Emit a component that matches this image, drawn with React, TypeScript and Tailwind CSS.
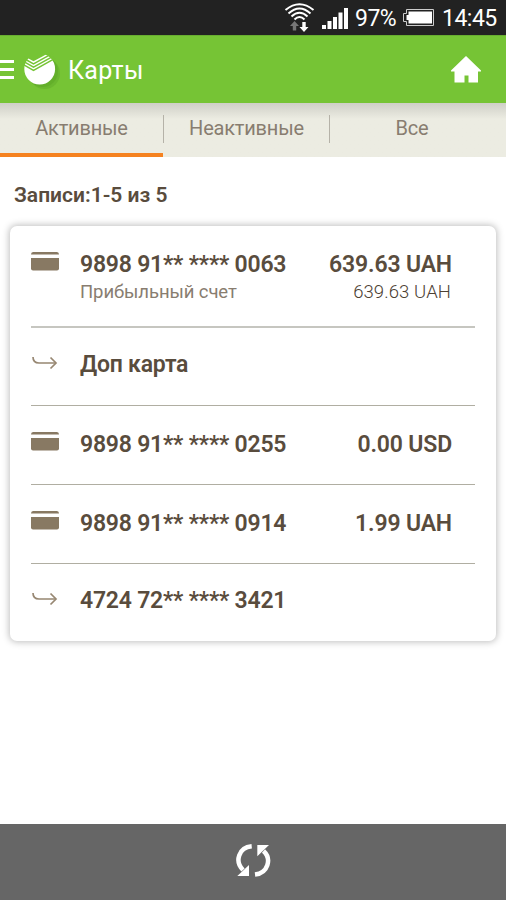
import type { ReactNode } from "react";

type Row = {
  kind: "card" | "linked";
  title: string;
  amount?: string;
  note?: string;
  noteAmount?: string;
  box: string;
};

const rows: Row[] = [
  {
    kind: "card",
    title: "9898 91** **** 0063",
    amount: "639.63 UAH",
    note: "Прибыльный счет",
    noteAmount: "639.63 UAH",
    box: "h-[102px] pt-[23px] border-b-2 border-[#c6c6c0]",
  },
  { kind: "linked", title: "Доп карта", box: "h-[78px] pt-[21px] border-b border-[#b0aea2]" },
  { kind: "card", title: "9898 91** **** 0255", amount: "0.00 USD", box: "h-[79px] pt-[23px] border-b border-[#b0aea2]" },
  { kind: "card", title: "9898 91** **** 0914", amount: "1.99 UAH", box: "h-[79px] pt-[23px] border-b border-[#b0aea2]" },
  { kind: "linked", title: "4724 72** **** 3421", box: "h-[77px] pt-[21px]" },
];

function StatusBar() {
  return (
    <div className="flex h-[35px] shrink-0 bg-[#222222] text-[23px] leading-[37px] text-white">
      <svg width="354" height="35" viewBox="0 0 354 35" fill="none" className="shrink-0">
        <g stroke="#fff" strokeWidth="2">
          <path d="M285.500 10Q299.500 -1.500 313.500 10" />
          <path d="M288.500 13.500Q299.500 3.500 310.500 13.500" />
          <path d="M291.500 16.500Q299.500 9 307.500 16.500" />
          <path d="M294.500 19.500Q299.500 14.500 304.500 19.500" />
        </g>
        <path d="M294.500 21l4.500 5h-2.800v4.500h-3.400V26H290z" fill="#777" />
        <path d="M304 32l-4.500-5h2.800v-5h3.400v5h2.800z" fill="#fff" />
        <path d="M322 25h4v4h-4zM327.500 21h4v8h-4zM333 17h4v12h-4zM338.500 12.500h4V29h-4zM344 8h4v21h-4z" fill="#fff" />
      </svg>
      <span className="w-[48px] pl-px tracking-[-0.5px]">97%</span>
      <svg width="41" height="35" viewBox="0 0 41 35" fill="none" className="shrink-0">
        <path d="M4.500 9.500h27v16h-27v-4h-3v-8h3z" stroke="#ccc" />
        <path d="M6.500 11.500H30v12H6.500v-3.500H4.500v-5h2z" fill="#fff" />
      </svg>
      <span className="-ml-px tracking-[-0.5px]">14:45</span>
    </div>
  );
}

function Logo() {
  return (
    <svg width="42" height="42" viewBox="0 0 42 42" className="ml-[7px] shrink-0">
      <circle cx="23.500" cy="24.500" r="15.500" fill="#5aa326" opacity="0.35" />
      <circle cx="21.500" cy="22.500" r="15.500" fill="#5aa326" opacity="0.45" />
      <circle cx="18.700" cy="20" r="15.400" fill="#fff" />
      {/* notch above the top stripe */}
      <path d="M3 7L12.500 12.300L26 5V2H3z" fill="#76c435" />
      <g fill="none" stroke="#76c435" strokeWidth="1.500">
        <path d="M3 9.500L12.500 15L32 4.200" />
        <path d="M2 12.200L12.500 18.200L32 7.400" />
        <path d="M2 15.400L12.500 21.400L34 9.400" />
      </g>
    </svg>
  );
}

function Header() {
  return (
    <header className="flex h-[68px] shrink-0 items-center border-t border-[#68ad30] bg-[#76c435]">
      <div className="flex w-3.5 flex-col gap-[5px]">
        <div className="h-[3px] bg-white" />
        <div className="h-[3px] bg-white" />
        <div className="h-[3px] bg-white" />
      </div>
      <Logo />
      <h1 className="ml-[5px] pt-[3px] text-[25px] tracking-[0.3px] text-white">Карты</h1>
      <svg width="32" height="28" viewBox="0 0 32 28" className="mr-6 ml-auto" fill="#fff">
        <path d="M16 0L31 14.500V15.500h-3V26.500h-9.500V19.500h-4v7H4.500V15.500H1V14.500z" />
      </svg>
    </header>
  );
}

function Tab({ children, className }: { children: ReactNode; className: string }) {
  return (
    <div className={`h-[54px] pt-[11px] text-center text-[20px] leading-7 tracking-[-0.2px] ${className}`}>
      {children}
    </div>
  );
}

function Tabs() {
  return (
    <nav className="flex h-[54px] shrink-0 bg-[#ecece2] bg-linear-to-b from-[#cfcfc7] to-[#ecece2] to-[16px] text-[#887d70]">
      <Tab className="w-[163px] border-b-4 border-[#f58220]">Активные</Tab>
      <div className="mt-3 h-7 w-px bg-[#b5b2a8]" />
      <Tab className="w-[165px]">Неактивные</Tab>
      <div className="mt-3 h-7 w-px bg-[#b5b2a8]" />
      <Tab className="w-[164px]">Все</Tab>
    </nav>
  );
}

function CardIcon() {
  return (
    <svg width="28" height="19" viewBox="0 0 28 19" fill="#887963" className="mt-[3px]">
      <path d="M0 2.500Q0 0 2 0H26Q28 0 28 2.500z" />
      <path d="M0 6H28V16.500Q28 18.500 26 18.500H2Q0 18.500 0 16.500z" />
    </svg>
  );
}

function LinkedIcon() {
  return (
    <svg width="28" height="16" viewBox="0 0 28 16" fill="none" stroke="#978772" strokeWidth="1.700" className="mt-[6px]">
      <path d="M2 2C2 6 4 8 8 8H25" />
      <path d="M19.500 2.500L25 8L19.500 13.500" />
    </svg>
  );
}

function AccountRow({ row }: { row: Row }) {
  return (
    <div className={`flex ${row.box}`}>
      <div className="w-[49px] shrink-0">{row.kind === "card" ? <CardIcon /> : <LinkedIcon />}</div>
      <div className="grow pt-px pr-[23px]">
        <div className="flex justify-between text-[23px] leading-[30px] font-semibold tracking-[-0.22px] text-[#594c3d]">
          <span>{row.title}</span>
          <span className="tracking-[-0.15px]">{row.amount}</span>
        </div>
        {row.note && (
          <div className="-mt-px flex justify-between text-[18.500px] leading-[26px] text-[#887d70]">
            <span className="tracking-[-0.1px]">{row.note}</span>
            <span className="pr-px font-light tracking-[0.1px] text-[#4c4033]">{row.noteAmount}</span>
          </div>
        )}
      </div>
    </div>
  );
}

export default function App() {
  return (
    <div className="flex h-[900px] w-[506px] flex-col overflow-hidden bg-white font-[Roboto,sans-serif]">
      <StatusBar />
      <Header />
      <Tabs />
      <main className="grow">
        <p className="pt-6 pl-3.5 text-[21px] leading-7 font-semibold text-[#594c3d]">Записи:1-5 из 5</p>
        <div className="mt-[17px] mr-2.5 ml-2.5 h-[415px] rounded-[7px] bg-white px-[21px] shadow-[0_0_7px_1px_rgba(0,0,0,0.26)]">
          {rows.map((row) => (
            <AccountRow key={row.title} row={row} />
          ))}
        </div>
      </main>
      <footer className="flex h-[76px] shrink-0 justify-center bg-[#666666] pt-[18px]">
        <svg width="36" height="36" viewBox="0 0 36 36" fill="none">
          <path d="M16.700 4.300C3.500 5.500 -0.500 19.500 8 28" stroke="#fff" strokeWidth="4.500" />
          <path d="M2.300 34L14 23V34z" fill="#fff" />
          <path d="M20 32.500C33 31 37 17 28.500 9" stroke="#fff" strokeWidth="4.500" />
          <path d="M34 3L22.300 14.300V3z" fill="#fff" />
        </svg>
      </footer>
    </div>
  );
}
